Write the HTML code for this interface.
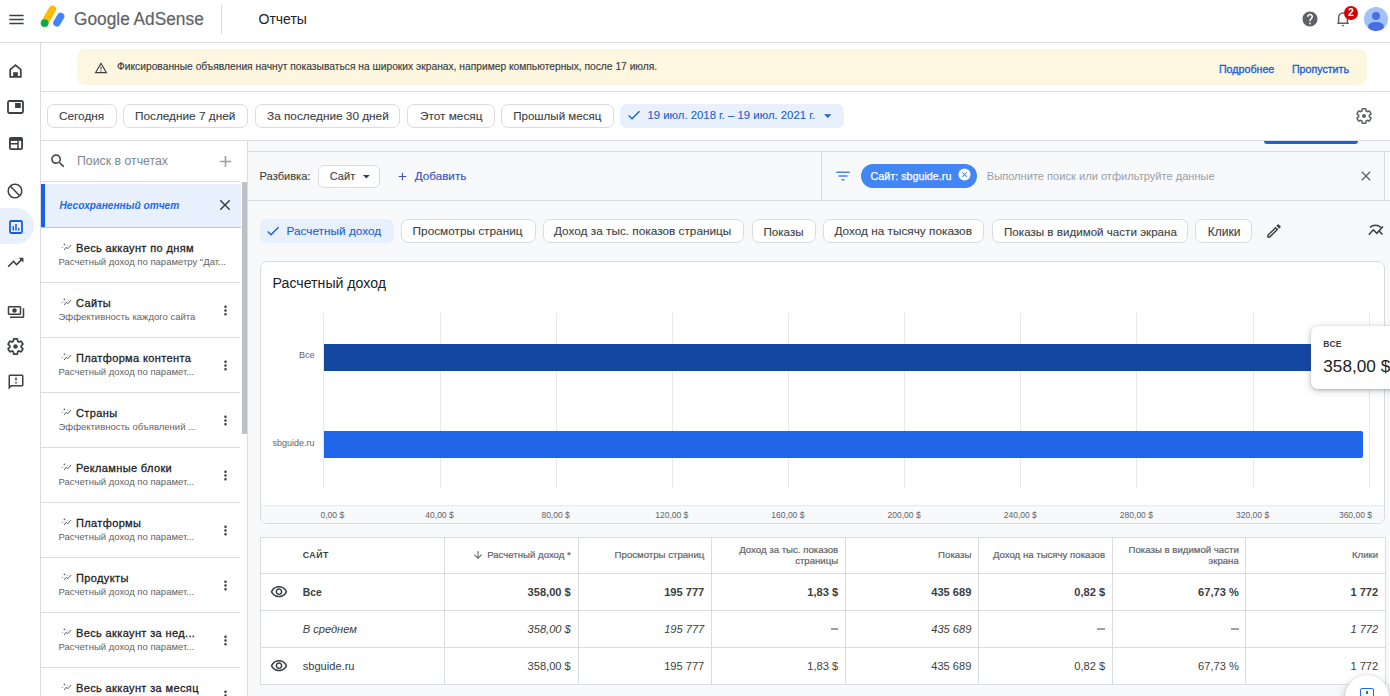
<!DOCTYPE html>
<html><head><meta charset="utf-8">
<style>
*{box-sizing:border-box;margin:0;padding:0}
html,body{width:1390px;height:696px;overflow:hidden;background:#fff;font-family:"Liberation Sans",sans-serif;color:#3c4043}
.a{position:absolute}
.t{position:absolute;white-space:nowrap;line-height:1}
svg{position:absolute;overflow:visible}
.chip{position:absolute;height:24px;border:1px solid #dadce0;border-radius:7px;background:#fff}
.mchip{position:absolute;top:219px;height:24px;border:1px solid #dadce0;border-radius:7px;background:#fff}
.ct{position:absolute;white-space:nowrap;line-height:1;font-size:11.8px;color:#3c4043;-webkit-text-stroke:0.1px currentColor}
.it{position:absolute;left:76px;white-space:nowrap;line-height:1;font-size:11px;font-weight:400;letter-spacing:0.37px;color:#202124;-webkit-text-stroke:0.28px #202124}
.is{position:absolute;left:58.5px;white-space:nowrap;line-height:1;font-size:9.5px;color:#5f6368}
.il{position:absolute;left:40px;width:200px;height:1px;background:#dadce0}
.gl{position:absolute;top:313px;width:1px;height:175px;background:#e9e9ea}
.ax{position:absolute;top:510.5px;white-space:nowrap;line-height:1;font-size:8.5px;color:#5f6368}
.vl{position:absolute;top:537px;width:1px;height:147px;background:#dadce0}
.hl{position:absolute;left:260px;width:1125px;height:1px;background:#dadce0}
.th{position:absolute;white-space:nowrap;line-height:1;font-size:9.65px;color:#5f6368;text-align:right;-webkit-text-stroke:0.2px #5f6368}
.td{position:absolute;white-space:nowrap;line-height:1;font-size:11.1px;color:#3c4043;text-align:right}
.b{font-weight:700;color:#3c4043}
.i{font-style:italic}
</style></head><body>

<!-- HEADER -->
<div class="a" style="left:0;top:42px;width:1390px;height:1px;background:#dadce0"></div>
<svg style="left:7px;top:9.5px" width="19" height="19" viewBox="0 0 24 24"><path fill="#3c4043" d="M3 18h18v-2H3v2zm0-5h18v-2H3v2zm0-7v2h18V6H3z"/></svg>
<svg style="left:0;top:0" width="70" height="40" viewBox="0 0 70 40">
  <line x1="44.6" y1="23.1" x2="52.4" y2="9.3" stroke="#fbbc04" stroke-width="7.4" stroke-linecap="round"/>
  <line x1="56.9" y1="22.8" x2="60.7" y2="16.4" stroke="#4285f4" stroke-width="7.4" stroke-linecap="round"/>
  <circle cx="44.6" cy="23.1" r="3.9" fill="#0caa4f"/>
</svg>
<div class="t" style="left:74.3px;top:10.1px;font-size:18.7px;color:#5f6368;-webkit-text-stroke:0.2px #5f6368;transform:scaleX(0.925);transform-origin:0 0">Google AdSense</div>
<div class="a" style="left:221px;top:4px;width:1px;height:30px;background:#dadce0"></div>
<div class="t" style="left:258.5px;top:12.3px;font-size:14px;color:#202124">Отчеты</div>
<svg style="left:1301px;top:10px" width="18" height="18" viewBox="0 0 24 24"><path fill="#5f6368" d="M12 2C6.48 2 2 6.48 2 12s4.48 10 10 10 10-4.48 10-10S17.52 2 12 2zm1 17h-2v-2h2v2zm2.07-7.75l-.9.92C13.45 12.9 13 13.5 13 15h-2v-.5c0-1.1.45-2.1 1.17-2.830l1.24-1.26c.37-.36.59-.86.59-1.41 0-1.1-.9-2-2-2s-2 .9-2 2H8c0-2.210 1.79-4 4-4s4 1.79 4 4c0 .88-.36 1.68-.93 2.25z"/></svg>
<svg style="left:1330px;top:0" width="30" height="30" viewBox="1330 0 30 30"><path fill="none" stroke="#5f6368" stroke-width="1.5" d="M1338.6 23.2V17.8c0-2.9 1.9-4.9 4.4-4.9s4.4 2 4.4 4.9v5.4M1337.2 23.3h11.6"/><rect x="1341.9" y="24.9" width="2.4" height="1.3" rx="0.6" fill="#5f6368"/></svg>
<div class="a" style="left:1344px;top:5.7px;width:14.4px;height:14.4px;border-radius:50%;background:#d50000"></div>
<div class="t" style="left:1347.9px;top:7.2px;font-size:10.5px;font-weight:700;color:#fff">2</div>
<div class="a" style="left:1364px;top:7px;width:24px;height:24px;border-radius:50%;background:#a1c2fa;overflow:hidden">
  <div class="a" style="left:7.8px;top:4.5px;width:8.6px;height:8.6px;border-radius:50%;background:#4a6ee0"></div>
  <div class="a" style="left:4.3px;top:15px;width:15.5px;height:8.6px;border-radius:50%;background:#4a6ee0"></div>
</div>

<!-- RAIL -->
<div class="a" style="left:40px;top:43px;width:1px;height:653px;background:#dadce0"></div>
<!-- home -->
<svg style="left:9px;top:64px" width="13" height="14" viewBox="0 0 13 14"><path fill="none" stroke="#3c4043" stroke-width="1.7" d="M1.2 12.9V5.6L6.5 1.1l5.3 4.5v7.3z"/><rect x="4.2" y="8.2" width="4.6" height="4.8" fill="#3c4043"/></svg>
<!-- ads -->
<svg style="left:7px;top:100px" width="17" height="14" viewBox="0 0 17 14"><rect x="1" y="1" width="15" height="12" rx="1.5" fill="none" stroke="#3c4043" stroke-width="1.8"/><rect x="8.1" y="3" width="5.7" height="5" fill="#3c4043"/></svg>
<!-- page -->
<svg style="left:9px;top:137px" width="14" height="13" viewBox="0 0 14 13"><rect x="0.9" y="0.9" width="12.2" height="11.2" rx="1.2" fill="none" stroke="#3c4043" stroke-width="1.8"/><rect x="0.9" y="0.9" width="12.2" height="3" fill="#3c4043"/><path d="M1 6.8h8M9 4v8" stroke="#3c4043" stroke-width="1.5"/></svg>
<!-- block -->
<svg style="left:6.4px;top:182px;transform:scaleX(-1)" width="18" height="18" viewBox="0 0 24 24"><path fill="#3c4043" d="M12 2C6.48 2 2 6.48 2 12s4.48 10 10 10 10-4.480 10-10S17.52 2 12 2zM4 12c0-4.42 3.58-8 8-8 1.85 0 3.55.63 4.9 1.69L5.69 16.9C4.63 15.55 4 13.85 4 12zm8 8c-1.85 0-3.55-.63-4.9-1.69L18.31 7.1C19.37 8.45 20 10.15 20 12c0 4.42-3.58 8-8 8z"/></svg>
<!-- active reports -->
<div class="a" style="left:0;top:208px;width:34px;height:36px;border-radius:0 18px 18px 0;background:#e8f0fe"></div>
<svg style="left:8.7px;top:220px" width="14" height="14" viewBox="0 0 14 14"><rect x="1" y="1" width="12" height="12" rx="1.2" fill="none" stroke="#1a5fd8" stroke-width="1.8"/><path d="M4.3 6v4.6M7 4v6.6M9.7 8v2.6" stroke="#1a5fd8" stroke-width="1.5"/></svg>
<!-- trending -->
<svg style="left:6px;top:253px" width="19" height="19" viewBox="0 0 24 24"><path fill="#3c4043" d="M16 6l2.29 2.29-4.88 4.88-4-4L2 16.590 3.41 18l6-6 4 4 6.3-6.29L22 12V6z"/></svg>
<!-- payments -->
<svg style="left:7px;top:302.5px" width="18" height="18" viewBox="0 0 24 24"><path fill="#3c4043" d="M19 14V6c0-1.1-.9-2-2-2H3c-1.1 0-2 .9-2 2v8c0 1.1.9 2 2 2h14c1.1 0 2-.9 2-2zm-2 0H3V6h14v8zm-7-7c-1.66 0-3 1.34-3 3s1.34 3 3 3 3-1.34 3-3-1.34-3-3-3zm13 0v11c0 1.1-.9 2-2 2H4v-2h17V7h2z"/></svg>
<!-- gear -->
<svg style="left:5.8px;top:337px" width="19" height="19" viewBox="0 0 24 24"><path fill="none" stroke="#3c4043" stroke-width="2.1" d="M19.14 12.94c.04-.3.06-.61.06-.94 0-.32-.02-.64-.07-.94l2.03-1.58c.18-.14.23-.41.12-.61l-1.92-3.32c-.12-.22-.37-.29-.59-.22l-2.39.96c-.5-.38-1.03-.7-1.62-.94l-.36-2.54c-.04-.24-.24-.41-.48-.41h-3.84c-.24 0-.43.17-.47.41l-.36 2.54c-.59.24-1.13.57-1.62.94l-2.39-.96c-.22-.08-.47 0-.59.22L2.74 8.87c-.12.21-.08.47.12.61l2.03 1.58c-.05.3-.09.63-.09.94s.02.64.07.94l-2.030 1.58c-.18.14-.23.41-.12.61l1.92 3.32c.12.22.37.29.59.22l2.39-.96c.5.38 1.03.7 1.62.94l.36 2.54c.05.24.24.41.48.41h3.84c.24 0 .44-.17.47-.41l.36-2.54c.59-.24 1.13-.56 1.62-.94l2.39.96c.22.08.47 0 .59-.22l1.92-3.32c.12-.22.07-.47-.12-.61l-2.01-1.58z"/><circle cx="12" cy="12" r="2.8" fill="#3c4043"/></svg>
<!-- feedback -->
<svg style="left:6.5px;top:373px" width="18" height="18" viewBox="0 0 24 24"><path fill="#3c4043" d="M20 2H4c-1.1 0-1.99.9-1.99 2L2 22l4-4h14c1.1 0 2-.9 2-2V4c0-1.1-.9-2-2-2zm0 14H5.17l-.59.59-.58.58V4h16v12zm-9-4h2v2h-2zm0-6h2v4h-2z"/></svg>

<!-- BANNER AREA -->
<div class="a" style="left:41px;top:91px;width:1349px;height:1px;background:#dadce0"></div>
<div class="a" style="left:77px;top:49px;width:1290px;height:36px;border-radius:8px;background:#fef7e0"></div>
<svg style="left:94px;top:60.5px" width="14" height="14" viewBox="0 0 24 24"><path fill="#3c4043" d="M12 5.99L19.53 19H4.47L12 5.99M12 2L1 21h22L12 2zm1 14h-2v2h2v-2zm0-6h-2v4h2v-4z"/></svg>
<div class="t" style="left:117px;top:61.7px;font-size:10.25px;color:#3c4043;-webkit-text-stroke:0.15px #3c4043">Фиксированные объявления начнут показываться на широких экранах, например компьютерных, после 17 июля.</div>
<div class="t" style="left:1218.9px;top:63.6px;font-size:10.7px;color:#1a63d6;-webkit-text-stroke:0.35px #1a63d6">Подробнее</div>
<div class="t" style="left:1291.9px;top:63.6px;font-size:10.66px;color:#1a63d6;-webkit-text-stroke:0.35px #1a63d6">Пропустить</div>

<!-- DATE ROW -->
<div class="a" style="left:41px;top:140px;width:1349px;height:1px;background:#dadce0"></div>
<div class="chip" style="left:47px;top:104px;width:70px"></div><div class="ct" style="left:59px;top:111.2px">Сегодня</div>
<div class="chip" style="left:123px;top:104px;width:125px"></div><div class="ct" style="left:135px;top:111.2px">Последние 7 дней</div>
<div class="chip" style="left:255px;top:104px;width:145px"></div><div class="ct" style="left:267px;top:111.2px">За последние 30 дней</div>
<div class="chip" style="left:407px;top:104px;width:87.5px"></div><div class="ct" style="left:420px;top:111.2px">Этот месяц</div>
<div class="chip" style="left:501px;top:104px;width:112.5px"></div><div class="ct" style="left:513.2px;top:111.2px;font-size:11.55px">Прошлый месяц</div>
<div class="a" style="left:620px;top:104px;width:224px;height:23.5px;border-radius:7px;background:#e8f0fe"></div>
<svg style="left:625.5px;top:107px" width="16" height="16" viewBox="0 0 24 24"><path fill="#1a5fd8" d="M9 16.17L4.83 12l-1.42 1.41L9 19 21 7l-1.41-1.41z"/></svg>
<div class="ct" style="left:647.5px;top:110.2px;font-size:11.33px;color:#1b5fd0">19 июл. 2018 г. – 19 июл. 2021 г.</div>
<svg style="left:818.5px;top:107.1px" width="17.5" height="17.5" viewBox="0 0 24 24"><path fill="#1b5fd0" d="M7 10l5 5 5-5z"/></svg>
<svg style="left:1354.6px;top:107.4px" width="18" height="18" viewBox="0 0 24 24"><path fill="none" stroke="#5f6368" stroke-width="2.1" d="M19.14 12.94c.04-.3.06-.61.06-.94 0-.32-.02-.64-.07-.94l2.03-1.58c.18-.14.23-.41.12-.61l-1.92-3.32c-.12-.22-.37-.29-.59-.22l-2.39.96c-.5-.38-1.03-.7-1.62-.94l-.36-2.54c-.04-.24-.24-.41-.48-.41h-3.84c-.24 0-.43.17-.47.41l-.36 2.54c-.59.24-1.13.57-1.62.94l-2.39-.96c-.22-.08-.47 0-.59.22L2.74 8.87c-.12.21-.08.47.12.61l2.03 1.58c-.05.3-.09.63-.09.94s.02.64.07.94l-2.030 1.58c-.18.14-.23.41-.12.61l1.92 3.32c.12.22.37.29.59.22l2.39-.96c.5.38 1.03.7 1.62.94l.36 2.54c.05.24.24.41.48.41h3.84c.24 0 .44-.17.47-.41l.36-2.54c.59-.24 1.13-.56 1.62-.94l2.39.96c.22.08.47 0 .59-.22l1.92-3.32c.12-.22.07-.47-.12-.61l-2.01-1.58z"/><circle cx="12" cy="12" r="2.8" fill="#5f6368"/></svg>

<!--LEFTPANEL-->
<div class="a" style="left:41px;top:141px;width:206px;height:555px;background:#fff"></div>
<div class="a" style="left:247px;top:141px;width:1px;height:555px;background:#dadce0"></div>
<svg style="left:49.2px;top:152.2px" width="18" height="18" viewBox="0 0 24 24"><path fill="#3c4043" d="M15.5 14h-.79l-.28-.27C15.41 12.59 16 11.11 16 9.5 16 5.91 13.09 3 9.5 3S3 5.910 3 9.5 5.91 16 9.5 16c1.61 0 3.09-.59 4.23-1.57l.27.28v.79l5 4.99L20.49 19l-4.99-5zm-6 0C7.01 14 5 11.99 5 9.5S7.01 5 9.5 5 14 7.01 14 9.5 11.99 14 9.5 14z"/></svg>
<div class="t" style="left:77px;top:154.7px;font-size:12.3px;color:#80868b">Поиск в отчетах</div>
<svg style="left:216px;top:151.5px" width="19" height="19" viewBox="0 0 24 24"><path fill="#9aa0a6" d="M19 13h-6v6h-2v-6H5v-2h6V5h2v6h6v2z"/></svg>
<div class="il" style="top:181px"></div>
<div class="a" style="left:41px;top:184px;width:200px;height:43px;background:#e8f0fe"></div>
<div class="a" style="left:41px;top:184px;width:4px;height:43px;background:#1a5fe8"></div>
<div class="a" style="left:41px;top:227px;width:200px;height:1px;background:#a8c7fa"></div>
<div class="t" style="left:59.5px;top:200.6px;font-size:10.17px;font-weight:700;font-style:italic;color:#1f69e6">Несохраненный отчет</div>
<svg style="left:216px;top:196px" width="18" height="18" viewBox="0 0 24 24"><path fill="#3c4043" d="M19 6.41L17.59 5 12 10.59 6.41 5 5 6.41 10.59 12 5 17.59 6.41 19 12 13.41 17.59 19 19 17.59 13.41 12z"/></svg>
<div class="a" style="left:241.5px;top:182px;width:5.5px;height:252px;background:#bdc1c6"></div>
<svg style="left:60.5px;top:243.2px" width="11" height="8" viewBox="0 0 11 8"><path d="M3.1 7.0L5.3 4.1 6.7 5.8 10.1 2.0" fill="none" stroke="#5f6368" stroke-width="1"/><circle cx="3.4" cy="1.3" r="0.85" fill="#5f6368"/><path d="M0.7 4.3H2.1" stroke="#80868b" stroke-width="0.8"/><circle cx="6.9" cy="2.3" r="0.5" fill="#80868b"/></svg>
<div class="it" style="top:242.7px">Весь аккаунт по дням</div>
<div class="is" style="top:257.2px">Расчетный доход по параметру "Дат...</div>
<div class="il" style="top:282px"></div>
<svg style="left:60.5px;top:298.2px" width="11" height="8" viewBox="0 0 11 8"><path d="M3.1 7.0L5.3 4.1 6.7 5.8 10.1 2.0" fill="none" stroke="#5f6368" stroke-width="1"/><circle cx="3.4" cy="1.3" r="0.85" fill="#5f6368"/><path d="M0.7 4.3H2.1" stroke="#80868b" stroke-width="0.8"/><circle cx="6.9" cy="2.3" r="0.5" fill="#80868b"/></svg>
<div class="it" style="top:297.7px">Сайты</div>
<div class="is" style="top:312.2px">Эффективность каждого сайта</div>
<svg style="left:218px;top:302.5px" width="15" height="15" viewBox="0 0 24 24"><path fill="#3c4043" d="M12 8c1.1 0 2-.9 2-2s-.9-2-2-2-2 .9-2 2 .9 2 2 2zm0 2c-1.1 0-2 .9-2 2s.9 2 2 2 2-.9 2-2-.9-2-2-2zm0 6c-1.1 0-2 .9-2 2s.9 2 2 2 2-.9 2-2-.9-2-2-2z"/></svg>
<div class="il" style="top:337px"></div>
<svg style="left:60.5px;top:353.2px" width="11" height="8" viewBox="0 0 11 8"><path d="M3.1 7.0L5.3 4.1 6.7 5.8 10.1 2.0" fill="none" stroke="#5f6368" stroke-width="1"/><circle cx="3.4" cy="1.3" r="0.85" fill="#5f6368"/><path d="M0.7 4.3H2.1" stroke="#80868b" stroke-width="0.8"/><circle cx="6.9" cy="2.3" r="0.5" fill="#80868b"/></svg>
<div class="it" style="top:352.7px">Платформа контента</div>
<div class="is" style="top:367.2px">Расчетный доход по парамет...</div>
<svg style="left:218px;top:357.5px" width="15" height="15" viewBox="0 0 24 24"><path fill="#3c4043" d="M12 8c1.1 0 2-.9 2-2s-.9-2-2-2-2 .9-2 2 .9 2 2 2zm0 2c-1.1 0-2 .9-2 2s.9 2 2 2 2-.9 2-2-.9-2-2-2zm0 6c-1.1 0-2 .9-2 2s.9 2 2 2 2-.9 2-2-.9-2-2-2z"/></svg>
<div class="il" style="top:392px"></div>
<svg style="left:60.5px;top:408.2px" width="11" height="8" viewBox="0 0 11 8"><path d="M3.1 7.0L5.3 4.1 6.7 5.8 10.1 2.0" fill="none" stroke="#5f6368" stroke-width="1"/><circle cx="3.4" cy="1.3" r="0.85" fill="#5f6368"/><path d="M0.7 4.3H2.1" stroke="#80868b" stroke-width="0.8"/><circle cx="6.9" cy="2.3" r="0.5" fill="#80868b"/></svg>
<div class="it" style="top:407.7px">Страны</div>
<div class="is" style="top:422.2px">Эффективность объявлений ...</div>
<svg style="left:218px;top:412.5px" width="15" height="15" viewBox="0 0 24 24"><path fill="#3c4043" d="M12 8c1.1 0 2-.9 2-2s-.9-2-2-2-2 .9-2 2 .9 2 2 2zm0 2c-1.1 0-2 .9-2 2s.9 2 2 2 2-.9 2-2-.9-2-2-2zm0 6c-1.1 0-2 .9-2 2s.9 2 2 2 2-.9 2-2-.9-2-2-2z"/></svg>
<div class="il" style="top:447px"></div>
<svg style="left:60.5px;top:463.2px" width="11" height="8" viewBox="0 0 11 8"><path d="M3.1 7.0L5.3 4.1 6.7 5.8 10.1 2.0" fill="none" stroke="#5f6368" stroke-width="1"/><circle cx="3.4" cy="1.3" r="0.85" fill="#5f6368"/><path d="M0.7 4.3H2.1" stroke="#80868b" stroke-width="0.8"/><circle cx="6.9" cy="2.3" r="0.5" fill="#80868b"/></svg>
<div class="it" style="top:462.7px">Рекламные блоки</div>
<div class="is" style="top:477.2px">Расчетный доход по парамет...</div>
<svg style="left:218px;top:467.5px" width="15" height="15" viewBox="0 0 24 24"><path fill="#3c4043" d="M12 8c1.1 0 2-.9 2-2s-.9-2-2-2-2 .9-2 2 .9 2 2 2zm0 2c-1.1 0-2 .9-2 2s.9 2 2 2 2-.9 2-2-.9-2-2-2zm0 6c-1.1 0-2 .9-2 2s.9 2 2 2 2-.9 2-2-.9-2-2-2z"/></svg>
<div class="il" style="top:502px"></div>
<svg style="left:60.5px;top:518.2px" width="11" height="8" viewBox="0 0 11 8"><path d="M3.1 7.0L5.3 4.1 6.7 5.8 10.1 2.0" fill="none" stroke="#5f6368" stroke-width="1"/><circle cx="3.4" cy="1.3" r="0.85" fill="#5f6368"/><path d="M0.7 4.3H2.1" stroke="#80868b" stroke-width="0.8"/><circle cx="6.9" cy="2.3" r="0.5" fill="#80868b"/></svg>
<div class="it" style="top:517.7px">Платформы</div>
<div class="is" style="top:532.2px">Расчетный доход по парамет...</div>
<svg style="left:218px;top:522.5px" width="15" height="15" viewBox="0 0 24 24"><path fill="#3c4043" d="M12 8c1.1 0 2-.9 2-2s-.9-2-2-2-2 .9-2 2 .9 2 2 2zm0 2c-1.1 0-2 .9-2 2s.9 2 2 2 2-.9 2-2-.9-2-2-2zm0 6c-1.1 0-2 .9-2 2s.9 2 2 2 2-.9 2-2-.9-2-2-2z"/></svg>
<div class="il" style="top:557px"></div>
<svg style="left:60.5px;top:573.2px" width="11" height="8" viewBox="0 0 11 8"><path d="M3.1 7.0L5.3 4.1 6.7 5.8 10.1 2.0" fill="none" stroke="#5f6368" stroke-width="1"/><circle cx="3.4" cy="1.3" r="0.85" fill="#5f6368"/><path d="M0.7 4.3H2.1" stroke="#80868b" stroke-width="0.8"/><circle cx="6.9" cy="2.3" r="0.5" fill="#80868b"/></svg>
<div class="it" style="top:572.7px">Продукты</div>
<div class="is" style="top:587.2px">Расчетный доход по парамет...</div>
<svg style="left:218px;top:577.5px" width="15" height="15" viewBox="0 0 24 24"><path fill="#3c4043" d="M12 8c1.1 0 2-.9 2-2s-.9-2-2-2-2 .9-2 2 .9 2 2 2zm0 2c-1.1 0-2 .9-2 2s.9 2 2 2 2-.9 2-2-.9-2-2-2zm0 6c-1.1 0-2 .9-2 2s.9 2 2 2 2-.9 2-2-.9-2-2-2z"/></svg>
<div class="il" style="top:612px"></div>
<svg style="left:60.5px;top:628.2px" width="11" height="8" viewBox="0 0 11 8"><path d="M3.1 7.0L5.3 4.1 6.7 5.8 10.1 2.0" fill="none" stroke="#5f6368" stroke-width="1"/><circle cx="3.4" cy="1.3" r="0.85" fill="#5f6368"/><path d="M0.7 4.3H2.1" stroke="#80868b" stroke-width="0.8"/><circle cx="6.9" cy="2.3" r="0.5" fill="#80868b"/></svg>
<div class="it" style="top:627.7px">Весь аккаунт за нед...</div>
<div class="is" style="top:642.2px">Расчетный доход по парамет...</div>
<svg style="left:218px;top:632.5px" width="15" height="15" viewBox="0 0 24 24"><path fill="#3c4043" d="M12 8c1.1 0 2-.9 2-2s-.9-2-2-2-2 .9-2 2 .9 2 2 2zm0 2c-1.1 0-2 .9-2 2s.9 2 2 2 2-.9 2-2-.9-2-2-2zm0 6c-1.1 0-2 .9-2 2s.9 2 2 2 2-.9 2-2-.9-2-2-2z"/></svg>
<div class="il" style="top:667px"></div>
<svg style="left:60.5px;top:683.2px" width="11" height="8" viewBox="0 0 11 8"><path d="M3.1 7.0L5.3 4.1 6.7 5.8 10.1 2.0" fill="none" stroke="#5f6368" stroke-width="1"/><circle cx="3.4" cy="1.3" r="0.85" fill="#5f6368"/><path d="M0.7 4.3H2.1" stroke="#80868b" stroke-width="0.8"/><circle cx="6.9" cy="2.3" r="0.5" fill="#80868b"/></svg>
<div class="it" style="top:682.7px">Весь аккаунт за месяц</div>
<svg style="left:218px;top:687.5px" width="15" height="15" viewBox="0 0 24 24"><path fill="#3c4043" d="M12 8c1.1 0 2-.9 2-2s-.9-2-2-2-2 .9-2 2 .9 2 2 2zm0 2c-1.1 0-2 .9-2 2s.9 2 2 2 2-.9 2-2-.9-2-2-2zm0 6c-1.1 0-2 .9-2 2s.9 2 2 2 2-.9 2-2-.9-2-2-2z"/></svg>

<!--MAIN-->
<div class="a" style="left:248px;top:141px;width:1142px;height:555px;background:#f8f9fa"></div>
<div class="a" style="left:1264px;top:140.5px;width:94px;height:3.3px;border-radius:0 0 3px 3px;background:#1a5fe8"></div>
<div class="a" style="left:248px;top:151px;width:1142px;height:1px;background:#dadce0"></div>
<div class="a" style="left:248px;top:200px;width:1142px;height:1px;background:#dadce0"></div>
<div class="a" style="left:1384px;top:151px;width:1px;height:50px;background:#dadce0"></div>
<div class="a" style="left:821px;top:151px;width:1px;height:50px;background:#dadce0"></div>
<div class="t" style="left:259.6px;top:170.8px;font-size:11.1px;color:#3c4043;-webkit-text-stroke:0.1px #3c4043">Разбивка:</div>
<div class="chip" style="left:317.5px;top:164.5px;width:62px;height:23px;border-radius:6px"></div>
<div class="t" style="left:329.8px;top:171px;font-size:11px;color:#3c4043;-webkit-text-stroke:0.1px #3c4043">Сайт</div>
<svg style="left:357.6px;top:167.9px" width="16.8" height="16.8" viewBox="0 0 24 24"><path fill="#3c4043" d="M7 10l5 5 5-5z"/></svg>
<svg style="left:395.5px;top:170px" width="13" height="13" viewBox="0 0 24 24"><path fill="#3d50c8" d="M19 13h-6v6h-2v-6H5v-2h6V5h2v6h6v2z"/></svg>
<div class="t" style="left:414.7px;top:169.8px;font-size:11.7px;color:#3d50c8;-webkit-text-stroke:0.15px #3d50c8">Добавить</div>
<svg style="left:834px;top:166.5px" width="18" height="18" viewBox="0 0 24 24"><path fill="#4a7ff0" d="M10 18h4v-2h-4v2zM3 6v2h18V6H3zm3 7h12v-2H6v2z"/></svg>
<div class="a" style="left:861px;top:164px;width:116px;height:24px;border-radius:12px;background:#4285f4"></div>
<div class="t" style="left:870.4px;top:170.8px;font-size:10.75px;color:#fff;font-weight:400;-webkit-text-stroke:0.25px #fff">Сайт: sbguide.ru</div>
<svg style="left:956.8px;top:167.2px" width="15" height="15" viewBox="0 0 24 24"><circle cx="12" cy="12" r="9.6" fill="#fff"/><path fill="#4285f4" d="M16.2 8.8L15.2 7.8 12 11 8.8 7.8 7.8 8.8 11 12 7.8 15.2 8.8 16.2 12 13 15.2 16.2 16.2 15.2 13 12z"/></svg>
<div class="t" style="left:986.8px;top:170.8px;font-size:11.1px;color:#9aa0a6">Выполните поиск или отфильтруйте данные</div>
<svg style="left:1358px;top:168px" width="16" height="16" viewBox="0 0 24 24"><path fill="#5f6368" d="M19 6.41L17.59 5 12 10.59 6.41 5 5 6.41 10.59 12 5 17.59 6.41 19 12 13.41 17.59 19 19 17.59 13.41 12z"/></svg>
<div class="a" style="left:260.4px;top:219.3px;width:133.2px;height:23.5px;border-radius:7px;background:#e8f0fe"></div>
<svg style="left:265px;top:223px" width="16" height="16" viewBox="0 0 24 24"><path fill="#1a5fd8" d="M9 16.17L4.83 12l-1.42 1.41L9 19 21 7l-1.41-1.41z"/></svg>
<div class="ct" style="left:286.5px;top:225.5px;color:#1b5fd0">Расчетный доход</div>
<div class="mchip" style="left:400.7px;width:134.9px"></div><div class="ct" style="left:412.6px;top:225.5px">Просмотры страниц</div>
<div class="mchip" style="left:542.6px;width:201.8px"></div><div class="ct" style="left:554px;top:225.5px">Доход за тыс. показов страницы</div>
<div class="mchip" style="left:751.6px;width:64.0px"></div><div class="ct" style="left:763.5px;top:225.5px;font-size:11.6px">Показы</div>
<div class="mchip" style="left:822.6px;width:161.9px"></div><div class="ct" style="left:834.4px;top:225.5px">Доход на тысячу показов</div>
<div class="mchip" style="left:991.7px;width:196.6px"></div><div class="ct" style="left:1004px;top:225.5px;font-size:11.61px">Показы в видимой части экрана</div>
<div class="mchip" style="left:1195.4px;width:57.0px"></div><div class="ct" style="left:1207.7px;top:225.5px;font-size:12.0px">Клики</div>
<svg style="left:1265px;top:222px" width="18" height="18" viewBox="0 0 24 24"><path fill="#3c4043" d="M3 17.25V21h3.75L17.81 9.94l-3.75-3.75L3 17.25zM5.92 19H5v-.92l9.06-9.06.92.92L5.92 19zM20.71 5.63l-2.34-2.34c-.2-.2-.45-.29-.71-.29s-.51.1-.7.29l-1.83 1.83 3.75 3.75 1.83-1.830c.39-.39.39-1.02 0-1.41z"/></svg>
<svg style="left:1368px;top:224px" width="16" height="12" viewBox="0 0 16 12"><path d="M0.8 10.8l4.5-5 3.5 3.5L15 2.5" fill="none" stroke="#3c4043" stroke-width="1.6"/><path d="M2 3.5c3-3 8-3 11 0M10.5 6.5l4 4" fill="none" stroke="#3c4043" stroke-width="1.6"/></svg>
<div class="a" style="left:260px;top:261px;width:1125px;height:262.5px;border:1px solid #dadce0;border-radius:7px;background:#fff;overflow:hidden"><div class="a" style="left:0;top:243px;width:1124px;height:20px;background:#f8f9fa;border-top:1px solid #e8eaed"></div></div>
<div class="t" style="left:272.6px;top:276.2px;font-size:14.15px;color:#202124">Расчетный доход</div>
<div class="gl" style="left:323.3px"></div>
<div class="gl" style="left:439.5px"></div>
<div class="gl" style="left:555.6px"></div>
<div class="gl" style="left:671.8px"></div>
<div class="gl" style="left:787.9px"></div>
<div class="gl" style="left:904.1px"></div>
<div class="gl" style="left:1020.3px"></div>
<div class="gl" style="left:1136.4px"></div>
<div class="gl" style="left:1252.6px"></div>
<div class="gl" style="left:1368.7px"></div>
<div class="ax" style="left:320.5px">0,00 $</div>
<div class="ax" style="left:399.5px;width:80px;text-align:center">40,00 $</div>
<div class="ax" style="left:515.6px;width:80px;text-align:center">80,00 $</div>
<div class="ax" style="left:631.8px;width:80px;text-align:center">120,00 $</div>
<div class="ax" style="left:747.9px;width:80px;text-align:center">160,00 $</div>
<div class="ax" style="left:864.1px;width:80px;text-align:center">200,00 $</div>
<div class="ax" style="left:980.3px;width:80px;text-align:center">240,00 $</div>
<div class="ax" style="left:1096.4px;width:80px;text-align:center">280,00 $</div>
<div class="ax" style="left:1212.6px;width:80px;text-align:center">320,00 $</div>
<div class="ax" style="left:1272px;width:100px;text-align:right">360,00 $</div>
<div class="t" style="left:250px;width:64.5px;text-align:right;top:350.7px;font-size:9px;color:#5f6368">Все</div>
<div class="t" style="left:250px;width:64.5px;text-align:right;top:438.6px;font-size:9px;color:#5f6368">sbguide.ru</div>
<div class="a" style="left:324px;top:343.5px;width:1045px;height:27px;background:#1347a2"></div>
<div class="a" style="left:324px;top:431px;width:1039px;height:27px;border-radius:0 2px 2px 0;background:#1f66e9"></div>
<div class="a" style="left:1311px;top:326px;width:100px;height:62.5px;border-radius:7px;background:#fff;box-shadow:0 1px 3px rgba(60,64,67,.3),0 2px 6px 2px rgba(60,64,67,.15)"></div>
<div class="t" style="left:1323.3px;top:339.8px;font-size:8.5px;font-weight:700;color:#3c4043;letter-spacing:0.3px">ВСЕ</div>
<div class="t" style="left:1323.3px;top:358.4px;font-size:17.2px;color:#202124">358,00 $</div>
<div class="a" style="left:260px;top:536.5px;width:1125.5px;height:148px;border:1px solid #dadce0;background:#fff"></div>
<div class="hl" style="top:573px"></div>
<div class="hl" style="top:610px"></div>
<div class="hl" style="top:647px"></div>
<div class="vl" style="left:444px"></div>
<div class="vl" style="left:578px"></div>
<div class="vl" style="left:711px"></div>
<div class="vl" style="left:845px"></div>
<div class="vl" style="left:978px"></div>
<div class="vl" style="left:1112px"></div>
<div class="vl" style="left:1245px"></div>
<div class="t" style="left:302.7px;top:551.2px;font-size:8.8px;font-weight:700;color:#3c4043;letter-spacing:0.5px">САЙТ</div>
<svg style="left:472px;top:548.5px" width="12" height="12" viewBox="0 0 24 24"><path fill="#5f6368" d="M20 12l-1.41-1.41L13 16.17V4h-2v12.17l-5.58-5.59L4 12l8 8 8-8z"/></svg>
<div class="th" style="left:370.79999999999995px;width:200px;top:550.2px;">Расчетный доход *</div>
<div class="th" style="left:504.29999999999995px;width:200px;top:550.2px;">Просмотры страниц</div>
<div class="th" style="left:771.4px;width:200px;top:550.2px;">Показы</div>
<div class="th" style="left:905.0999999999999px;width:200px;top:550.2px;">Доход на тысячу показов</div>
<div class="th" style="left:1178.2px;width:200px;top:550.2px;">Клики</div>
<div class="th" style="left:638.2px;width:200px;top:544.5px;">Доход за тыс. показов</div>
<div class="th" style="left:638.2px;width:200px;top:556px;">страницы</div>
<div class="th" style="left:1038.8px;width:200px;top:544.5px;">Показы в видимой части</div>
<div class="th" style="left:1038.8px;width:200px;top:556px;">экрана</div>
<div class="td b" style="left:370.79999999999995px;width:200px;top:586.8px;">358,00 $</div>
<div class="td b" style="left:504.29999999999995px;width:200px;top:586.8px;">195 777</div>
<div class="td b" style="left:638.2px;width:200px;top:586.8px;">1,83 $</div>
<div class="td b" style="left:771.4px;width:200px;top:586.8px;">435 689</div>
<div class="td b" style="left:905.0999999999999px;width:200px;top:586.8px;">0,82 $</div>
<div class="td b" style="left:1038.8px;width:200px;top:586.8px;">67,73 %</div>
<div class="td b" style="left:1178.2px;width:200px;top:586.8px;">1 772</div>
<div class="td i" style="left:370.79999999999995px;width:200px;top:623.5px;">358,00 $</div>
<div class="td i" style="left:504.29999999999995px;width:200px;top:623.5px;">195 777</div>
<div class="a" style="left:830.5px;top:628.2px;width:7.7px;height:1.5px;background:#9da1a5"></div>
<div class="td i" style="left:771.4px;width:200px;top:623.5px;">435 689</div>
<div class="a" style="left:1097.4px;top:628.2px;width:7.7px;height:1.5px;background:#9da1a5"></div>
<div class="a" style="left:1231.1px;top:628.2px;width:7.7px;height:1.5px;background:#9da1a5"></div>
<div class="td i" style="left:1178.2px;width:200px;top:623.5px;">1 772</div>
<div class="td" style="left:370.79999999999995px;width:200px;top:660.7px;">358,00 $</div>
<div class="td" style="left:504.29999999999995px;width:200px;top:660.7px;">195 777</div>
<div class="td" style="left:638.2px;width:200px;top:660.7px;">1,83 $</div>
<div class="td" style="left:771.4px;width:200px;top:660.7px;">435 689</div>
<div class="td" style="left:905.0999999999999px;width:200px;top:660.7px;">0,82 $</div>
<div class="td" style="left:1038.8px;width:200px;top:660.7px;">67,73 %</div>
<div class="td" style="left:1178.2px;width:200px;top:660.7px;">1 772</div>
<div class="t b" style="left:302.7px;top:587.5px;font-size:10.4px">Все</div>
<div class="t i" style="left:302.7px;top:623.5px;font-size:11.1px;color:#3c4043">В среднем</div>
<div class="t" style="left:302.7px;top:660.7px;font-size:11.1px;color:#3c4043">sbguide.ru</div>
<svg style="left:269.5px;top:582.5px" width="18" height="18" viewBox="0 0 24 24"><path fill="#3c4043" d="M12 6c3.79 0 7.17 2.13 8.82 5.5C19.17 14.87 15.79 17 12 17s-7.17-2.13-8.82-5.5C4.83 8.13 8.21 6 12 6m0-2C7 4 2.73 7.11 1 11.5 2.73 15.89 7 19 12 19s9.27-3.11 11-7.5C21.27 7.11 17 4 12 4zm0 5c1.38 0 2.5 1.12 2.5 2.5S13.38 14 12 14s-2.5-1.12-2.5-2.5S10.62 9 12 9m0-2c-2.48 0-4.5 2.02-4.5 4.5S9.52 16 12 16s4.5-2.02 4.5-4.5S14.48 7 12 7z"/></svg>
<svg style="left:269.5px;top:656.5px" width="18" height="18" viewBox="0 0 24 24"><path fill="#3c4043" d="M12 6c3.79 0 7.17 2.13 8.82 5.5C19.17 14.87 15.79 17 12 17s-7.17-2.13-8.82-5.5C4.83 8.13 8.21 6 12 6m0-2C7 4 2.73 7.11 1 11.5 2.73 15.89 7 19 12 19s9.27-3.11 11-7.5C21.27 7.11 17 4 12 4zm0 5c1.38 0 2.5 1.12 2.5 2.5S13.38 14 12 14s-2.5-1.12-2.5-2.5S10.62 9 12 9m0-2c-2.48 0-4.5 2.02-4.5 4.5S9.52 16 12 16s4.5-2.02 4.5-4.5S14.48 7 12 7z"/></svg>
<div class="a" style="left:1345px;top:675px;width:44px;height:44px;border-radius:50%;background:#fff;box-shadow:0 1px 3px rgba(60,64,67,.3),0 4px 8px 3px rgba(60,64,67,.15)"></div>
<div class="a" style="left:1359.5px;top:688.3px;width:14.5px;height:14px;border:1.8px solid #1f6ae8;border-radius:2px"></div>
<div class="a" style="left:1366px;top:691px;width:1.6px;height:3px;background:#1f6ae8"></div>

</body></html>
